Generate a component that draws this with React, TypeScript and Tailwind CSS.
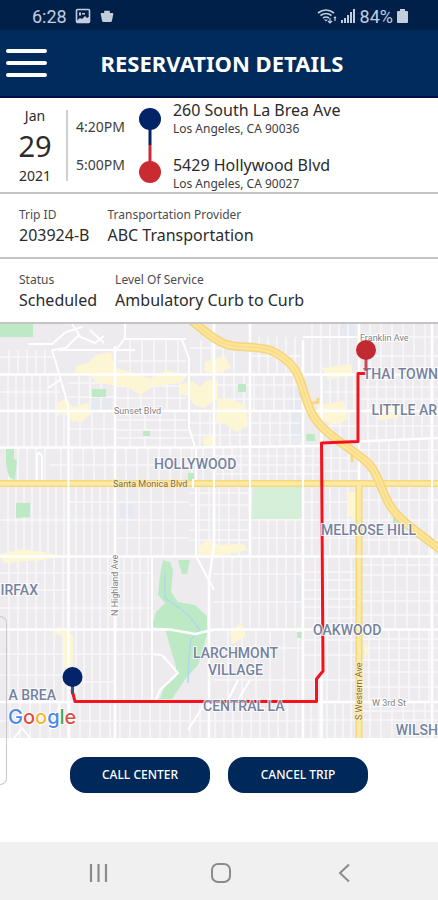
import type { ReactNode } from "react";

type Block = { x: [number, number]; y: [number, number]; cols: number; rows?: number[] };

const blocks: Block[] = [
  { x: [0, 60], y: [374, 411], cols: 8, rows: [392] },
  { x: [0, 54], y: [350, 374], cols: 9, rows: [357] },
  { x: [68, 115], y: [374, 411], cols: 11, rows: [383, 397] },
  { x: [118, 186], y: [340, 374], cols: 12, rows: [361] },
  { x: [115, 186], y: [374, 411], cols: 13, rows: [386, 398] },
  { x: [0, 68], y: [411, 447], cols: 8 },
  { x: [68, 115], y: [411, 447], cols: 12, rows: [429] },
  { x: [115, 190], y: [411, 447], cols: 15, rows: [420, 430, 438] },
  { x: [0, 50], y: [447, 483], cols: 9 },
  { x: [50, 115], y: [447, 483], cols: 11, rows: [465] },
  { x: [115, 214], y: [447, 483], cols: 11, rows: [465] },
  { x: [0, 68], y: [483, 556], cols: 8, rows: [520] },
  { x: [68, 115], y: [483, 556], cols: 8, rows: [502, 520] },
  { x: [115, 189], y: [483, 556], cols: 12, rows: [502, 520, 538] },
  { x: [189, 250], y: [483, 556], cols: 10, rows: [493, 505, 520, 530, 540] },
  { x: [0, 68], y: [556, 629], cols: 9, rows: [573, 590, 608] },
  { x: [68, 152], y: [556, 629], cols: 8, rows: [573, 608] },
  { x: [0, 68], y: [629, 702], cols: 9, rows: [654, 675] },
  { x: [68, 115], y: [629, 702], cols: 8, rows: [654, 682] },
  { x: [115, 152], y: [629, 702], cols: 9, rows: [654] },
  { x: [0, 206], y: [702, 738], cols: 10, rows: [721] },
  { x: [206, 303], y: [702, 738], cols: 9, rows: [721] },
  { x: [214, 303], y: [556, 629], cols: 9, rows: [574, 602] },
  { x: [214, 303], y: [629, 702], cols: 14, rows: [648, 680] },
  { x: [250, 303], y: [483, 556], cols: 9, rows: [502, 520, 538] },
  { x: [303, 358], y: [483, 556], cols: 9, rows: [502, 520, 538] },
  { x: [303, 358], y: [556, 702], cols: 12, rows: [572, 580, 590, 599, 607, 618, 640, 655, 680] },
  { x: [303, 358], y: [702, 738], cols: 8, rows: [720] },
  { x: [359, 438], y: [556, 629], cols: 12, rows: [565, 575, 592, 601, 615] },
  { x: [359, 438], y: [629, 702], cols: 10, rows: [639, 648, 660, 672, 687] },
  { x: [359, 438], y: [702, 738], cols: 11, rows: [711, 720] },
  { x: [359, 438], y: [483, 556], cols: 10, rows: [500, 520, 540] },
  { x: [322, 359], y: [447, 483], cols: 9, rows: [458, 471] },
  { x: [322, 359], y: [411, 442], cols: 9, rows: [426] },
  { x: [359, 438], y: [440, 483], cols: 10, rows: [450, 463] },
  { x: [359, 438], y: [374, 440], cols: 9, rows: [387, 399, 411, 426] },
  { x: [359, 438], y: [324, 374], cols: 11, rows: [337, 356] },
  { x: [303, 359], y: [324, 374], cols: 9, rows: [337] },
  { x: [322, 359], y: [374, 411], cols: 8, rows: [392] },
  { x: [250, 300], y: [337, 374], cols: 9, rows: [356] },
  { x: [214, 300], y: [374, 411], cols: 10, rows: [385, 399] },
  { x: [190, 300], y: [411, 447], cols: 10, rows: [423, 435] },
  { x: [214, 320], y: [447, 483], cols: 9, rows: [456, 465, 474] },
  { x: [190, 240], y: [340, 374], cols: 11, rows: [348] },
];

function blockPath({ x, y, cols, rows = [] }: Block) {
  let d = "";
  for (let px = x[0] + cols; px < x[1] - 3; px += cols) d += `M${px} ${y[0]}V${y[1]}`;
  for (const py of rows) d += `M${x[0]} ${py}H${x[1]}`;
  return d;
}

const minorStreets = blocks.map(blockPath).join("");

const freeway =
  "M188 318C201 327 211 339 225 344C240 349 258 345 272 351C286 358 295 366 300 380C305 394 307 406 314 417C324 433 343 443 362 458C380 471 379 489 391 507C401 522 418 532 442 551";

function AreaLabel({ x, y, end, children }: { x: number; y: number; end?: boolean; children: ReactNode }) {
  return (
    <text
      x={x}
      y={y}
      textAnchor={end ? "end" : "start"}
      className="fill-[#74829f] stroke-white/80 stroke-2 font-['Roboto',sans-serif] text-[14px] font-medium [paint-order:stroke]"
    >
      {children}
    </text>
  );
}

function StreetLabel({ x, y, vertical, brown, children }: { x: number; y: number; vertical?: boolean; brown?: boolean; children: ReactNode }) {
  return (
    <text
      x={x}
      y={y}
      transform={vertical ? `rotate(-90 ${x} ${y})` : undefined}
      className={`${brown ? "fill-[#7d6a50] stroke-[#fdeeb5]" : "fill-[#808080] stroke-white"} stroke-2 font-['Roboto',sans-serif] text-[9px] [paint-order:stroke]`}
    >
      {children}
    </text>
  );
}

function RouteMap() {
  return (
    <svg
      role="img"
      aria-label="Trip route map"
      viewBox="0 324 438 414"
      preserveAspectRatio="xMidYMid slice"
      className="block h-[414px] w-full bg-[#eeebef]"
    >
      <g fill="#e6eaf0">
        <path d="M92 397h20v13H92zM120 503h13v15h-13zM296 577h8v25h-8zM290 388h13v50h-13zM340 324h15v12h-15z" />
      </g>
      <path d={minorStreets} fill="none" stroke="#f8f7f9" strokeWidth="1.5" />

      <g fill="#fdf6d5">
        <path d="M76 366l12-3 8-8 15-3 4 16 16 4 20 7 16-9 20 5-6 8-28 3-12 9-12-7-32-6-8-7-14-2z" />
        <path d="M57 403l8-4 8 8 15-4 3 11-8 7-11 1-8-9-7 3z" />
        <path d="M180 385l12-4 8 6 6-6 12-2v20l-14 9-10-3-6-9-8-2zM205 362l20-6 6 12-15 6-12-3z" />
        <path d="M218 398l16 2 12 6 2 20-12 6-11-8-9-3zM322 368l30-4v12l-24 3zM318 405l26-4 4 18-12 6-18-6z" />
        <path d="M203 437l10-1v11l-9 1zM347 492h12v30l-12-8zM376 410l26-6-4 14-18 2z" />
        <path d="M0 554l22-5 20 3 24 4-24 4-38 3zM198 548l8-8 14 5 24-1 4 6-28 6-18 2zM52 634l8-7 13 8v30l-9 2v-32zM230 632l12-10 4 14-14 8zM364 640l5 10-4 10z" />
      </g>
      <g fill="#bdeac5">
        <path d="M0 324h33v13H0zM92 389h14v8H92zM143 431h7v5h-7zM6 449h8v10l3 1-2 20-6-3-3-13zM16 503h14v14l-14 1zM188 473h6v10h-6zM238 384h8v8h-8zM306 434h9v7h-9zM297 632h6v6h-6zM393 515l9 9h-9zM178 560h12l-3 14h-5z" />
        <path d="M163 560L170 562L173 570L171 592L178 602L195 605L207 616V634L203 650L198 665L186 678L178 690L172 699H160L164 688L176 677V667L165 629L152 627L156 612L165 603L158 595L160 575Z" />
      </g>
      <path d="M253 487h49v32h-51z" fill="#d5efd9" />
      <path d="M165 573v25l16 11 9 8 10 13-9 9-2 18-1 26" fill="none" stroke="#afd9ec" strokeWidth="1.5" />

      <g fill="none" stroke="#ffffff" strokeLinejoin="round">
        <path
          strokeWidth="2.5"
          d="M0 374.500H438M0 411H438M0 447.500H190L320 446M322 443L438 438M0 556.500H438M0 629.500H170L195 634L214 629.500H438M0 702H438M68.500 411V738M115 346V738M214 324V545L209 580V738M250 324V556M303 340V738M321.500 374V738M359 324V483M432 324V738"
        />
        <path
          strokeWidth="2"
          d="M52 350L58 370L68 405V411M125 324V338L114 353M52 350L66 348L78 336L95 343L104 336M58 350H135M28 344H52L66 332L82 327M72 324L80 336M90 330L104 343M48 388L60 380M125 339H186M182 340L189 358V428L196 450V556M152 654L162 655L178 673L160 690L155 702M152 702V556M37 483V456Q38 450 42 456V483M206 702L188 730M196 556L214 590M238 680L228 700M250 680L238 700M303 337H355M14 738L22 728L30 738M60 702L56 720"
        />
      </g>

      <g fill="none" strokeLinejoin="round">
        <path d="M0 483.500H438" stroke="#f5d87c" strokeWidth="7" />
        <path d="M359 483V738" stroke="#f5d87c" strokeWidth="7" />
        <path d="M0 483.500H438M359 483V738" stroke="#fdeaa2" strokeWidth="4" />
        <path d="M68.500 479V488M193 479V488M214 479V488M250 479V488M303 479V488M432 479V488M355 556.500H363" stroke="#ffffff" strokeWidth="2" />
        <path d="M301 380V395L308 404L318 402V398M352 450V462" stroke="#f5d87c" strokeWidth="3" />
        <path d={freeway} stroke="#f3d57e" strokeWidth="9" />
        <path d={freeway} stroke="#fde497" strokeWidth="6" />
        <path d={freeway} stroke="#f6d986" strokeWidth="1" />
      </g>

      <path
        d="M72 690L75 701.500H316.500V679L323 671L321.500 443L358 441.500V373.500H366"
        fill="none"
        stroke="#f5121d"
        strokeWidth="3"
        strokeLinejoin="round"
      />

      <StreetLabel x={360} y={341}>Franklin Ave</StreetLabel>
      <StreetLabel x={114} y={414}>Sunset Blvd</StreetLabel>
      <StreetLabel x={113} y={487} brown>Santa Monica Blvd</StreetLabel>
      <StreetLabel x={118} y={616} vertical>N Highland Ave</StreetLabel>
      <StreetLabel x={362} y={720} vertical brown>S Western Ave</StreetLabel>
      <StreetLabel x={372} y={706}>W 3rd St</StreetLabel>

      <AreaLabel x={438} y={379} end>THAI TOWN</AreaLabel>
      <AreaLabel x={437} y={415} end>LITTLE AR</AreaLabel>
      <AreaLabel x={154} y={469}>HOLLYWOOD</AreaLabel>
      <AreaLabel x={321} y={535}>MELROSE HILL</AreaLabel>
      <AreaLabel x={38} y={595} end>IRFAX</AreaLabel>
      <AreaLabel x={313} y={635}>OAKWOOD</AreaLabel>
      <AreaLabel x={193} y={658}>LARCHMONT</AreaLabel>
      <AreaLabel x={208} y={675}>VILLAGE</AreaLabel>
      <AreaLabel x={56} y={700} end>A BREA</AreaLabel>
      <AreaLabel x={203} y={711}>CENTRAL LA</AreaLabel>
      <AreaLabel x={438} y={735} end>WILSH</AreaLabel>

      <path d="M366 350V371" stroke="#c84a55" strokeWidth="3" />
      <circle cx="366" cy="350" r="10" fill="#c12a31" />
      <path d="M72.500 677V694" stroke="#3d5485" strokeWidth="3" />
      <circle cx="72.500" cy="677" r="10" fill="#04246a" />

      <text x="8" y="724" className="stroke-white stroke-2 font-['Inter',sans-serif] text-[20px] font-medium [paint-order:stroke]">
        <tspan fill="#4a88ec">G</tspan>
        <tspan fill="#e14e43">o</tspan>
        <tspan fill="#f4b72b">o</tspan>
        <tspan fill="#4a88ec">g</tspan>
        <tspan fill="#43a65b">l</tspan>
        <tspan fill="#e14e43">e</tspan>
      </text>
    </svg>
  );
}

function StatusBar() {
  return (
    <div className="flex h-[30px] items-center justify-between bg-[#00204a] pt-[2px] pr-[30px] pl-8 font-['Roboto',sans-serif] text-[18px] text-[#c3cddc]">
      <div className="flex items-center gap-2">
        <span>6:28</span>
        <svg aria-hidden="true" viewBox="0 0 16 16" className="size-4">
          <rect x="1.500" y="1.500" width="13" height="13" rx="1" fill="none" stroke="currentColor" strokeWidth="1.600" />
          <path d="M2 12.500l3-2.500 2 1 3-3 2 2 2-1v5H2z" fill="currentColor" />
          <path d="M4 4.500h2v3H4zM7 5h3v1.500H7z" fill="currentColor" />
        </svg>
        <svg aria-hidden="true" viewBox="0 0 16 16" className="size-4">
          <path d="M2.500 5h11q1 0 .8 1L13 12.500q-.3 1.500-1.500 1.500h-7Q3.300 14 3 12.500L1.700 6q-.2-1 .8-1z" fill="currentColor" />
          <path d="M6 5V3.500h4V5" fill="currentColor" stroke="currentColor" strokeWidth="1.600" />
        </svg>
      </div>
      <div className="flex items-center gap-1">
        <svg aria-hidden="true" viewBox="0 0 20 16" className="h-4 w-5">
          <g fill="none" stroke="currentColor" strokeWidth="1.600">
            <path d="M1 5q8-6 16 0M3.500 7.500q5.500-4 11 0M6 10q3-2 6 0" />
            <path d="M13 10v5M11 13l2 2 2-2M18 13v-4M17 10l1-1 1 1" strokeWidth="1.200" />
          </g>
          <path d="M7 11.500h4l-2 2z" fill="currentColor" />
        </svg>
        <svg aria-hidden="true" viewBox="0 0 15 16" className="h-4 w-[15px]" fill="currentColor">
          <path d="M0 12h2v3H0zM3 10h2v5H3zM6 7h2v8H6zM9 4h2v11H9zM12 1h2v14h-2z" />
        </svg>
        <span>84%</span>
        <svg aria-hidden="true" viewBox="0 0 11 16" className="h-4 w-[11px]" fill="currentColor">
          <path d="M3 1h5v2h2q1 0 1 1v10q0 1-1 1H1q-1 0-1-1V4q0-1 1-1h2z" />
        </svg>
      </div>
    </div>
  );
}

function Field({ label, value }: { label: string; value: string }) {
  return (
    <div>
      <dt className="text-[12px] leading-[18px] text-[#4c4c4c]">{label}</dt>
      <dd className="text-[16px] leading-[22px]">{value}</dd>
    </div>
  );
}

function Stop({ street, city }: { street: string; city: string }) {
  return (
    <div>
      <p className="text-[16px] leading-5 whitespace-nowrap">{street}</p>
      <p className="text-[12px] leading-[18px] whitespace-nowrap text-[#3d3d3d]">{city}</p>
    </div>
  );
}

export default function App() {
  return (
    <div className="relative flex min-h-screen flex-col bg-white font-['Noto_Sans',sans-serif] text-[#2b2b2b]">
      <StatusBar />
      <header className="flex h-[68px] items-center border-b-2 border-[#000d4a] bg-[#002b5c] pl-[6px]">
        <button type="button" aria-label="Open menu" className="flex w-[41px] flex-col gap-2">
          <span className="h-1 rounded-sm bg-white" />
          <span className="h-1 rounded-sm bg-white" />
          <span className="h-1 rounded-sm bg-white" />
        </button>
        <h1 className="flex-1 pr-[41px] text-center text-[22px] font-bold whitespace-nowrap text-white">RESERVATION DETAILS</h1>
      </header>

      <main className="flex flex-1 flex-col">
        <section aria-label="Itinerary" className="flex h-24 border-b-2 border-[#c4c4c4]">
          <div className="flex w-[66px] flex-col items-center pt-2 pl-1 text-center">
            <span className="text-[14px] leading-5">Jan</span>
            <span className="text-[29px] leading-10">29</span>
            <span className="text-[14px] leading-5">2021</span>
          </div>
          <div className="mt-3 h-[71px] w-[2px] bg-[#cfcfcf]" />
          <div className="flex flex-col gap-[18px] pt-[19px] pl-2 text-[14px] leading-5 text-[#3d3d3d]">
            <span>4:20PM</span>
            <span>5:00PM</span>
          </div>
          <svg aria-hidden="true" viewBox="0 0 22 75" className="mt-[10px] ml-[14px] h-[75px] w-[22px] shrink-0">
            <path d="M11 11V37" stroke="#04246a" strokeWidth="3" />
            <path d="M11 37V64" stroke="#c92b30" strokeWidth="3" />
            <circle cx="11" cy="11" r="11" fill="#04246a" />
            <circle cx="11" cy="64" r="11" fill="#c92b30" />
          </svg>
          <div className="flex flex-col gap-[17px] pt-[2px] pl-3">
            <Stop street="260 South La Brea Ave" city="Los Angeles, CA 90036" />
            <Stop street="5429 Hollywood Blvd" city="Los Angeles, CA 90027" />
          </div>
        </section>
        <dl className="flex h-[65px] gap-[18px] border-b-2 border-[#c4c4c4] pt-3 pl-[19px]">
          <Field label="Trip ID" value="203924-B" />
          <Field label="Transportation Provider" value="ABC Transportation" />
        </dl>
        <dl className="flex h-[65px] gap-[18px] border-b-2 border-[#c4c4c4] pt-3 pl-[19px]">
          <Field label="Status" value="Scheduled" />
          <Field label="Level Of Service" value="Ambulatory Curb to Curb" />
        </dl>
        <RouteMap />
        <div className="flex justify-center gap-[18px] pt-[19px]">
          <button type="button" className="h-9 w-[140px] rounded-2xl bg-[#002858] text-[12px] font-medium text-white">CALL CENTER</button>
          <button type="button" className="h-9 w-[140px] rounded-2xl bg-[#002858] text-[12px] font-medium text-white">CANCEL TRIP</button>
        </div>
      </main>

      <div className="absolute top-[616px] left-0 h-[169px] w-[7px] rounded-r-lg border border-l-0 border-[#c8c8cc]" />

      <nav aria-label="System" className="flex h-[58px] items-center justify-between bg-[#f0f0f0] pt-1 pr-[84px] pl-[88px] text-[#8b8b8b]">
        <button type="button" aria-label="Recent apps">
          <svg aria-hidden="true" viewBox="0 0 20 20" className="size-5">
            <path d="M3 1V19M10.500 1V19M18 1V19" stroke="currentColor" strokeWidth="2.200" />
          </svg>
        </button>
        <button type="button" aria-label="Home">
          <svg aria-hidden="true" viewBox="0 0 20 20" className="size-5">
            <rect x="1" y="1" width="18" height="18" rx="6" fill="none" stroke="currentColor" strokeWidth="2" />
          </svg>
        </button>
        <button type="button" aria-label="Back">
          <svg aria-hidden="true" viewBox="0 0 20 20" className="size-5">
            <path d="M15 1.500L6 10L15 18.500" fill="none" stroke="currentColor" strokeWidth="2" />
          </svg>
        </button>
      </nav>
    </div>
  );
}
